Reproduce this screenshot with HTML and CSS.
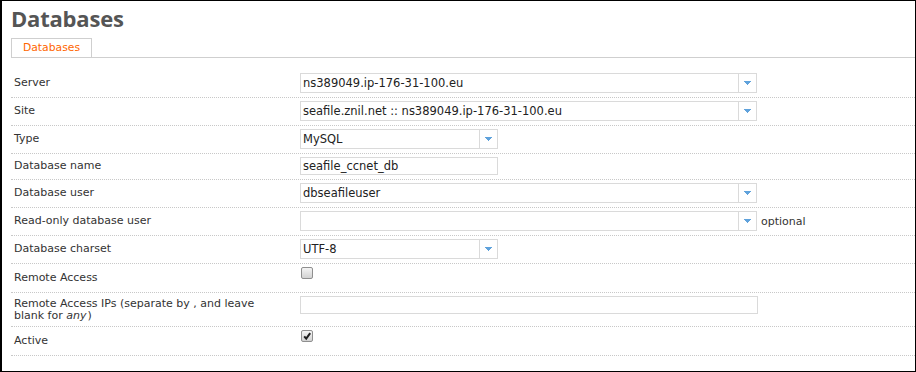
FILE: index.html
```html
<!DOCTYPE html>
<html lang="en">
  <head>
    <meta charset="UTF-8" />
    <title>Databases</title>
    <link rel="stylesheet" href="styles.css">
  </head>
  <body>
    <div class="window">
      <h1 class="page-title">Databases</h1>

      <div class="tabs">
        <span class="tab">Databases</span>
      </div>

      <div class="form">
        <div class="row">
          <label class="label">Server</label>
          <div class="select wide">
            <span class="select-value">ns389049.ip-176-31-100.eu</span>
            <span class="select-arrow"><svg width="7" height="4" viewBox="0 0 7 4"><rect x="0" y="0" width="7" height="1"/><rect x="1" y="1" width="5" height="1"/><rect x="2" y="2" width="3" height="1"/><rect x="3" y="3" width="1" height="1"/></svg></span>
          </div>
        </div>

        <div class="row">
          <label class="label">Site</label>
          <div class="select wide">
            <span class="select-value">seafile.znil.net :: ns389049.ip-176-31-100.eu</span>
            <span class="select-arrow"><svg width="7" height="4" viewBox="0 0 7 4"><rect x="0" y="0" width="7" height="1"/><rect x="1" y="1" width="5" height="1"/><rect x="2" y="2" width="3" height="1"/><rect x="3" y="3" width="1" height="1"/></svg></span>
          </div>
        </div>

        <div class="row">
          <label class="label">Type</label>
          <div class="select narrow">
            <span class="select-value">MySQL</span>
            <span class="select-arrow"><svg width="7" height="4" viewBox="0 0 7 4"><rect x="0" y="0" width="7" height="1"/><rect x="1" y="1" width="5" height="1"/><rect x="2" y="2" width="3" height="1"/><rect x="3" y="3" width="1" height="1"/></svg></span>
          </div>
        </div>

        <div class="row">
          <label class="label" for="database_name">Database name</label>
          <input class="text narrow" type="text" id="database_name" value="seafile_ccnet_db" />
        </div>

        <div class="row">
          <label class="label">Database user</label>
          <div class="select wide">
            <span class="select-value">dbseafileuser</span>
            <span class="select-arrow"><svg width="7" height="4" viewBox="0 0 7 4"><rect x="0" y="0" width="7" height="1"/><rect x="1" y="1" width="5" height="1"/><rect x="2" y="2" width="3" height="1"/><rect x="3" y="3" width="1" height="1"/></svg></span>
          </div>
        </div>

        <div class="row">
          <label class="label">Read-only database user</label>
          <div class="select wide">
            <span class="select-value"></span>
            <span class="select-arrow"><svg width="7" height="4" viewBox="0 0 7 4"><rect x="0" y="0" width="7" height="1"/><rect x="1" y="1" width="5" height="1"/><rect x="2" y="2" width="3" height="1"/><rect x="3" y="3" width="1" height="1"/></svg></span>
          </div>
          <span class="hint">optional</span>
        </div>

        <div class="row">
          <label class="label">Database charset</label>
          <div class="select narrow">
            <span class="select-value">UTF-8</span>
            <span class="select-arrow"><svg width="7" height="4" viewBox="0 0 7 4"><rect x="0" y="0" width="7" height="1"/><rect x="1" y="1" width="5" height="1"/><rect x="2" y="2" width="3" height="1"/><rect x="3" y="3" width="1" height="1"/></svg></span>
          </div>
        </div>

        <div class="row">
          <label class="label">Remote Access</label>
          <div class="check-field">
            <span class="check"></span>
          </div>
        </div>

        <div class="row">
          <label class="label label-multi" for="remote_ips">Remote Access IPs (separate by , and leave blank for <em>any</em>)</label>
          <input class="text wide top" type="text" id="remote_ips" value="" />
        </div>

        <div class="row">
          <label class="label">Active</label>
          <div class="check-field">
            <span class="check"><svg width="10" height="10" viewBox="0 0 10 10"><path d="M2.2 5.4 L4.2 7.6 L8.2 2.2" fill="none" stroke="#1e1e1e" stroke-width="2"/></svg></span>
          </div>
        </div>
      </div>
    </div>
  </body>
</html>
```

FILE: styles.css
```css
body {
  margin: 0;
  padding: 0;
  background: #fff;
  font-family: "DejaVu Sans", Verdana, sans-serif;
}

.window {
  width: 916px;
  height: 372px;
  box-sizing: border-box;
  border-style: solid;
  border-color: #000;
  border-width: 1px 1px 1px 2px;
  padding: 4px 0 0 9px;
  overflow: hidden;
}

.page-title {
  margin: 0;
  font-family: "Open Sans", sans-serif;
  font-weight: 700;
  font-size: 22px;
  line-height: 26px;
  letter-spacing: -0.2px;
  color: #555;
}

.tabs {
  display: flex;
  margin-top: 7px;
  border-bottom: 1px solid #cfcfcf;
}

.tab {
  width: 79px;
  height: 18px;
  line-height: 18px;
  border: 1px solid #cfcfcf;
  border-bottom: none;
  text-align: center;
  font-size: 10.8px;
  color: #f60;
}

.form {
  margin-top: 12px;
}

.row {
  display: flex;
  align-items: center;
  padding: 3px 0 4px;
  border-bottom: 1px dotted #c8c8c8;
}

.label {
  flex: 0 0 289px;
  box-sizing: border-box;
  padding: 0 16px 0 3px;
  font-size: 11px;
  line-height: 14px;
  color: #333;
}

.label em {
  padding-right: 1px;
}

.label-multi {
  align-self: flex-start;
  line-height: 12px;
  padding-top: 2px;
}

.select {
  display: flex;
  height: 20px;
  box-sizing: border-box;
  border: 1px solid #dadada;
  background: #fff;
}

.select.wide {
  width: 457px;
}

.select.narrow {
  width: 198px;
}

.select-value {
  flex: 1;
  padding-left: 2px;
  font-size: 11.5px;
  line-height: 18px;
  color: #222;
  white-space: nowrap;
  overflow: hidden;
}

.select-arrow {
  width: 18px;
  box-sizing: border-box;
  border-left: 1px solid #dadada;
  display: flex;
  align-items: center;
  justify-content: center;
}

.select-arrow svg {
  fill: #5fa2dc;
}

.text {
  height: 18px;
  margin: 0;
  box-sizing: border-box;
  border: 1px solid #dadada;
  padding: 0 2px;
  font-family: "DejaVu Sans", Verdana, sans-serif;
  font-size: 11.5px;
  color: #222;
  outline: none;
}

.text.narrow {
  width: 198px;
}

.text.wide {
  width: 458px;
}

.text.top {
  align-self: flex-start;
}

.hint {
  margin-left: 4px;
  font-size: 11px;
  color: #333;
}

.check-field {
  height: 21px;
}

.check {
  display: flex;
  align-items: center;
  justify-content: center;
  width: 12px;
  height: 12px;
  margin-left: 1px;
  box-sizing: border-box;
  border: 1px solid #8f8f8f;
  border-radius: 2px;
  background: linear-gradient(#f4f4f4, #d2d2d2);
}
```
